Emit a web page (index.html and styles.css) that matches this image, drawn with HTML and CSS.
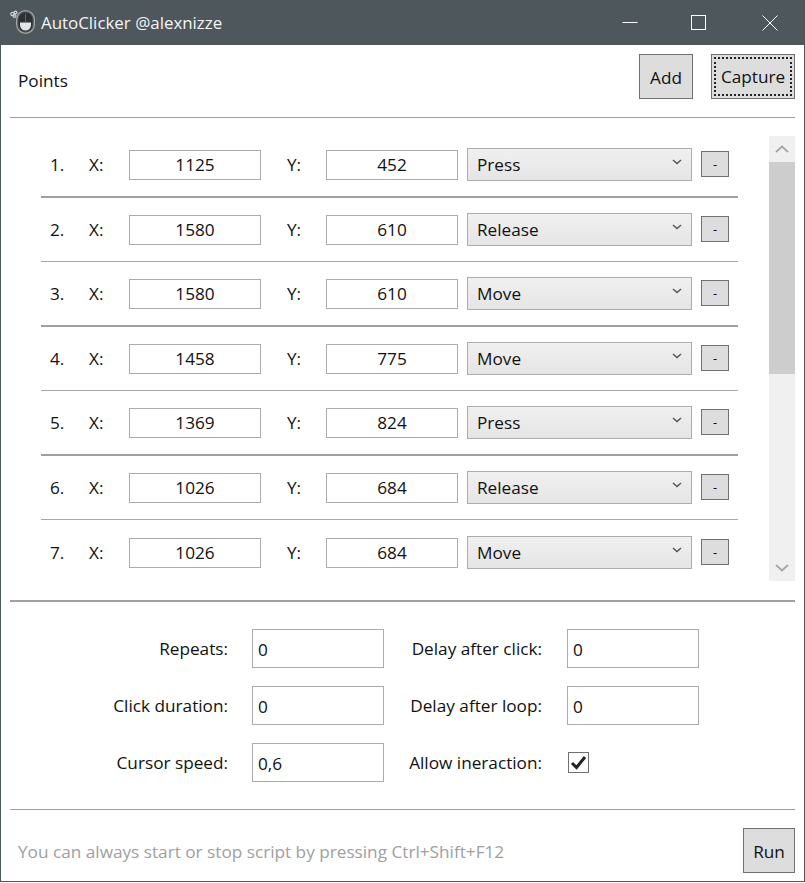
FILE: index.html
```html
<!DOCTYPE html>
<html lang="en">
<head>
<meta charset="utf-8">
<title>AutoClicker @alexnizze</title>
<link rel="stylesheet" href="styles.css">
</head>
<body>
<div class="window">
  <header class="titlebar">
    <svg class="app-icon" width="28" height="28" viewBox="0 0 28 28">
      <circle cx="4.5" cy="5" r="1.7" fill="none" stroke="#d2d4d6" stroke-width="1.2"/>
      <circle cx="7.5" cy="3.5" r="1.4" fill="none" stroke="#d2d4d6" stroke-width="1.2"/>
      <circle cx="6.5" cy="7" r="1.4" fill="none" stroke="#d2d4d6" stroke-width="1.2"/>
      <rect x="8.6" y="1.6" width="17.8" height="22.8" rx="8.9" fill="#4e575c" stroke="#a4a6a8" stroke-width="1.2"/>
      <rect x="10.5" y="3.5" width="14" height="19" rx="7" fill="#2e3133"/>
      <path d="M12 13.4h11v2.6a5.5 5.5 0 0 1-11 0z" fill="#e4e4e4"/>
      <path d="M17.2 4.5h.7v8.9h-.7z" fill="#77797b"/>
    </svg>
    <span class="title">AutoClicker @alexnizze</span>
    <div class="controls">
      <svg class="ctl ctl-min" width="16" height="16" viewBox="0 0 16 16"><path d="M0.5 8.5h15" stroke="#fff" fill="none"/></svg>
      <svg class="ctl ctl-max" width="16" height="16" viewBox="0 0 16 16"><rect x="0.5" y="0.5" width="14" height="14" stroke="#fff" fill="none"/></svg>
      <svg class="ctl ctl-close" width="16" height="16" viewBox="0 0 16 16"><path d="M0.5 0.5l15 15M15.5 0.5l-15 15" stroke="#fff" fill="none"/></svg>
    </div>
  </header>

  <main class="body">
    <section class="toolbar">
      <span class="points">Points</span>
      <button class="btn btn-add">Add</button>
      <button class="btn btn-capture"><span class="focus">Capture</span></button>
    </section>

    <section class="list">
      <div class="rows">
        <div class="row thick"><span class="num">1.</span><span class="lx">X:</span><span class="field">1125</span><span class="ly">Y:</span><span class="field">452</span><div class="select"><span>Press</span><svg width="10" height="6" viewBox="0 0 10 6"><path d="M1 1l4 3.5L9 1" fill="none" stroke="#555" stroke-width="1.5"/></svg></div><button class="minus">-</button></div>
        <div class="row"><span class="num">2.</span><span class="lx">X:</span><span class="field">1580</span><span class="ly">Y:</span><span class="field">610</span><div class="select"><span>Release</span><svg width="10" height="6" viewBox="0 0 10 6"><path d="M1 1l4 3.5L9 1" fill="none" stroke="#555" stroke-width="1.5"/></svg></div><button class="minus">-</button></div>
        <div class="row thick"><span class="num">3.</span><span class="lx">X:</span><span class="field">1580</span><span class="ly">Y:</span><span class="field">610</span><div class="select"><span>Move</span><svg width="10" height="6" viewBox="0 0 10 6"><path d="M1 1l4 3.5L9 1" fill="none" stroke="#555" stroke-width="1.5"/></svg></div><button class="minus">-</button></div>
        <div class="row"><span class="num">4.</span><span class="lx">X:</span><span class="field">1458</span><span class="ly">Y:</span><span class="field">775</span><div class="select"><span>Move</span><svg width="10" height="6" viewBox="0 0 10 6"><path d="M1 1l4 3.5L9 1" fill="none" stroke="#555" stroke-width="1.5"/></svg></div><button class="minus">-</button></div>
        <div class="row thick"><span class="num">5.</span><span class="lx">X:</span><span class="field">1369</span><span class="ly">Y:</span><span class="field">824</span><div class="select"><span>Press</span><svg width="10" height="6" viewBox="0 0 10 6"><path d="M1 1l4 3.5L9 1" fill="none" stroke="#555" stroke-width="1.5"/></svg></div><button class="minus">-</button></div>
        <div class="row"><span class="num">6.</span><span class="lx">X:</span><span class="field">1026</span><span class="ly">Y:</span><span class="field">684</span><div class="select"><span>Release</span><svg width="10" height="6" viewBox="0 0 10 6"><path d="M1 1l4 3.5L9 1" fill="none" stroke="#555" stroke-width="1.5"/></svg></div><button class="minus">-</button></div>
        <div class="row last"><span class="num">7.</span><span class="lx">X:</span><span class="field">1026</span><span class="ly">Y:</span><span class="field">684</span><div class="select"><span>Move</span><svg width="10" height="6" viewBox="0 0 10 6"><path d="M1 1l4 3.5L9 1" fill="none" stroke="#555" stroke-width="1.5"/></svg></div><button class="minus">-</button></div>
      </div>
      <div class="scrollbar">
        <div class="sb-btn"><svg width="14" height="8" viewBox="0 0 14 8"><path d="M1 7l6-5.5L13 7" fill="none" stroke="#a6a6a6" stroke-width="1.8"/></svg></div>
        <div class="sb-thumb"></div>
        <div class="sb-track"></div>
        <div class="sb-btn"><svg width="14" height="8" viewBox="0 0 14 8"><path d="M1 1l6 5.5L13 1" fill="none" stroke="#a6a6a6" stroke-width="1.8"/></svg></div>
      </div>
    </section>

    <section class="settings">
      <span class="lbl">Repeats:</span><span class="input">0</span>
      <span class="lbl lbl-right">Delay after click:</span><span class="input">0</span>
      <span class="lbl">Click duration:</span><span class="input">0</span>
      <span class="lbl lbl-right">Delay after loop:</span><span class="input">0</span>
      <span class="lbl">Cursor speed:</span><span class="input">0,6</span>
      <span class="lbl lbl-right">Allow ineraction:</span>
      <span class="check"><svg width="17" height="15" viewBox="0 0 17 15"><path d="M2 8l4.5 4.5L15 2" fill="none" stroke="#222" stroke-width="3"/></svg></span>
    </section>

    <footer class="footer">
      <span class="hint">You can always start or stop script by pressing Ctrl+Shift+F12</span>
      <button class="btn btn-run">Run</button>
    </footer>
  </main>
</div>
</body>
</html>
```

FILE: styles.css
```css
* { box-sizing: border-box; }
html, body { margin: 0; padding: 0; }
body {
  width: 805px;
  height: 883px;
  overflow: hidden;
  background: #fff;
  font-family: "Open Sans", "Noto Sans", sans-serif;
  font-size: 17.2px;
  color: #111;
}
.window {
  width: 805px;
  height: 882px;
  display: flex;
  flex-direction: column;
  border: 1px solid #4e575c;
  border-top: 0;
  background: #fff;
}
.titlebar {
  height: 45px;
  flex: none;
  display: flex;
  align-items: center;
  background: #4e575c;
  color: #fff;
  padding-left: 7px;
}
.app-icon { flex: none; }
.title { margin-left: 5px; font-size: 16.9px; color: #f4f4f4; }
.controls {
  margin-left: auto;
  display: flex;
  align-items: center;
  padding-right: 26px;
}
.ctl { display: block; }
.ctl-min { margin-right: 53px; margin-top: -2px; }
.ctl-max { margin-right: 55px; }
.body {
  flex: 1;
  display: flex;
  flex-direction: column;
  padding: 0 9px 0 9px;
  min-height: 0;
}
.toolbar {
  height: 73px;
  flex: none;
  display: flex;
  align-items: center;
  border-bottom: 1px solid #a0a0a0;
  padding: 9px 0 18px 8px;
}
.points { margin-right: auto; margin-top: 7px; }
.btn {
  font: inherit;
  color: #111;
  background: #dddddd;
  border: 1px solid #707070;
  padding: 2px 0 0;
  height: 45px;
}
.btn-add { width: 54px; }
.btn-capture { width: 84px; margin-left: 18px; padding: 2px; }
.focus {
  display: flex;
  align-items: center;
  justify-content: center;
  width: 100%;
  height: 100%;
  border: 2px dotted #222;
}
.list {
  flex: none;
  height: 445px;
  margin-top: 18px;
  display: flex;
  overflow: hidden;
}
.rows {
  width: 728px;
  padding-left: 31px;
  flex: none;
  margin-top: -3px;
}
.row {
  height: 64.5px;
  display: grid;
  grid-template-columns: 9px 39px 40px 132px 26px 39px 132px 9px 225px 9px 28px 9px;
  align-items: center;
  border-bottom: 1px solid #a8a8a8;
}
.row.thick { border-bottom: 2px solid #a0a0a0; }
.row.last { border-bottom: 0; }
.row > .num { grid-column: 2; }
.row > .lx { grid-column: 3; }
.row > .field:nth-of-type(3) { grid-column: 4; }
.row > .ly { grid-column: 6; }
.row > .field:nth-of-type(5) { grid-column: 7; }
.row > .select { grid-column: 9; }
.row > .minus { grid-column: 11; }
.field {
  height: 30px;
  margin-top: 2px;
  padding-bottom: 1px;
  border: 1px solid #ababab;
  display: flex;
  align-items: center;
  justify-content: center;
  background: #fff;
}
.select {
  height: 33px;
  border: 1px solid #acacac;
  background: linear-gradient(#f0f0f0, #e5e5e5);
  display: flex;
  align-items: center;
  justify-content: space-between;
  padding: 0 9px;
}
.select svg { margin-top: -5px; }
.minus {
  height: 26px;
  width: 28px;
  padding: 0;
  font: inherit;
  font-size: 13px;
  color: #111;
  background: #dddddd;
  border: 1px solid #707070;
}
.scrollbar {
  width: 26px;
  margin-left: auto;
  display: flex;
  flex-direction: column;
  background: #f0f0f0;
}
.sb-btn {
  height: 26px;
  flex: none;
  display: flex;
  align-items: center;
  justify-content: center;
}
.sb-thumb { height: 212px; flex: none; background: #cdcdcd; }
.sb-track { flex: 1; }
.settings {
  flex: none;
  height: 210px;
  margin-top: 19px;
  border-top: 2px solid #a0a0a0;
  border-bottom: 1px solid #a0a0a0;
  display: grid;
  grid-template-columns: 218px 132px 135px 132px;
  grid-auto-rows: 39px;
  row-gap: 18px;
  column-gap: 24px;
  align-items: center;
  padding-top: 27px;
  align-content: start;
}
.lbl { text-align: right; }
.lbl-right { padding-right: 1px; }
.input {
  height: 39px;
  border: 1px solid #ababab;
  display: flex;
  align-items: center;
  padding: 1px 0 0 5px;
  background: #fff;
}
.check {
  width: 21px;
  height: 21px;
  border: 1px solid #707070;
  display: flex;
  align-items: center;
  justify-content: center;
  margin-left: 1px;
  margin-top: -1px;
}
.footer {
  flex: 1;
  display: flex;
  align-items: center;
  justify-content: space-between;
  padding-left: 8px;
  padding-top: 10px;
}
.hint { color: #a0a0a0; margin-top: 2px; }
.btn-run { width: 52px; }
```
